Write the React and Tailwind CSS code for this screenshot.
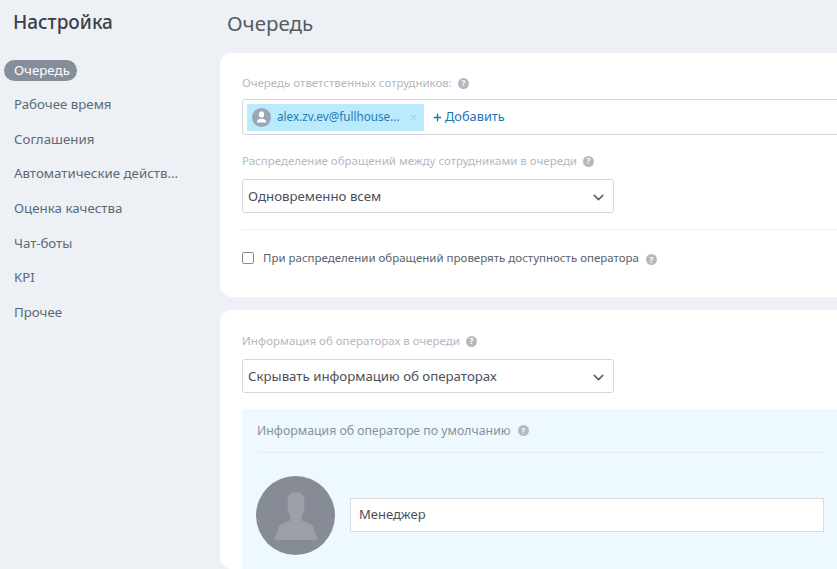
import React from "react";
import { ChevronDown, Plus, X } from "lucide-react";

const menu = [
  "Очередь",
  "Рабочее время",
  "Соглашения",
  "Автоматические действ...",
  "Оценка качества",
  "Чат-боты",
  "KPI",
  "Прочее",
];

const Help = ({ className = "" }) => (
  <span className={`inline-flex w-[11px] h-[11px] rounded-full bg-[#b5b9be] text-white text-[8px] font-bold leading-none items-center justify-center ${className}`}>
    ?
  </span>
);

const Label = ({ children }) => (
  <div className="flex items-center gap-[6px] text-[11.5px] leading-[16px] text-[#b4b8bd]">
    {children}
    <Help />
  </div>
);

const Select = ({ children }) => (
  <div className="w-[372px] h-[34px] mt-[10px] flex items-center justify-between pl-[5px] pr-[6px] pt-[2px] bg-white border border-[#d5d9de] rounded-[3px] text-[13.25px] text-[#4a505a]">
    {children}
    <ChevronDown size={17} strokeWidth={2.2} className="text-[#5a616b]" />
  </div>
);

const App = () => {
  return (
    <div className="w-[837px] h-[569px] overflow-hidden flex bg-[#edf1f5] font-['Noto_Sans',sans-serif]">
      {/* Sidebar */}
      <aside className="w-[220px] shrink-0">
        <h1 className="pl-[13px] pt-[9px] text-[19px] leading-[26px] font-medium text-[#3b4048]">Настройка</h1>
        <nav className="mt-[25px] flex flex-col gap-[13.6px] items-start">
          {menu.map((item, i) => (
            <div
              key={item}
              className={
                i === 0
                  ? "ml-[4px] pl-[10px] pr-[7px] h-[21px] flex items-center rounded-full bg-[#868e99] text-[13.3px] text-white"
                  : "ml-[14px] h-[21px] flex items-center text-[13.3px] text-[#5f6975]"
              }
            >
              {item}
            </div>
          ))}
        </nav>
      </aside>

      {/* Main */}
      <main className="flex-1 min-w-0">
        <h2 className="pl-[7px] pt-[8px] h-[53px] text-[20.5px] leading-[30px] text-[#555b63]">Очередь</h2>

        <section className="h-[244px] bg-white rounded-l-xl pl-[22px] pt-[22px]">
          <Label>Очередь ответственных сотрудников:</Label>
          <div className="w-[640px] h-[36px] mt-[8px] flex items-center pl-[4px] bg-white border border-[#d5d9de] rounded-[3px]">
            <div className="w-[177px] h-[27px] flex items-center bg-[#b9ebfd] pl-[5px] pr-[6px]">
              <div className="w-[19px] h-[19px] rounded-full bg-[#9aa5b5] flex items-center justify-center shrink-0">
                <svg width="11" height="12" viewBox="0 0 11 12" fill="white">
                  <ellipse cx="5.5" cy="3.4" rx="2.6" ry="3.2" />
                  <path d="M0.8 11.500c0-2.600 2-3.400 3.200-3.800h3c1.200 .4 3.200 1.200 3.200 3.800z" />
                </svg>
              </div>
              <span className="ml-[6px] text-[11.7px] text-[#2878b5] whitespace-nowrap">alex.zv.ev@fullhouse...</span>
              <X size={9} strokeWidth={2} className="ml-auto text-[#9fb4c0]" />
            </div>
            <Plus size={11} strokeWidth={3} className="ml-[8px] text-[#1e73b8]" />
            <span className="ml-[2px] text-[12.8px] text-[#1e73b8]">Добавить</span>
          </div>

          <div className="mt-[18px]">
            <Label>Распределение обращений между сотрудниками в очереди</Label>
          </div>
          <Select>Одновременно всем</Select>
          <div className="mt-[16px] h-px bg-[#eef0f2]" />

          <div className="mt-[20px] flex items-center">
            <span className="w-[12px] h-[12px] border-[1.5px] border-[#868c95] rounded-[2px] bg-white" />
            <span className="ml-[9px] text-[11.5px] leading-[16px] text-[#5b616b]">
              При распределении обращений проверять доступность оператора
            </span>
            <Help className="ml-[7px] mt-[3px]" />
          </div>
        </section>

        <section className="mt-[13px] h-[259px] bg-white rounded-l-xl pl-[22px] pt-[23px]">
          <Label>Информация об операторах в очереди</Label>
          <Select>Скрывать информацию об операторах</Select>

          <div className="mt-[16px] h-[160px] bg-[#edf9ff] pl-[14px] pr-[13px] pt-[14px]">
            <div className="ml-px h-[30px] border-b border-[#e3edf2] flex items-start gap-[7px] text-[12.3px] leading-[16px] text-[#8a9097]">
              Информация об операторе по умолчанию
              <Help className="mt-[2px]" />
            </div>
            <div className="mt-[23px] flex items-center gap-[15px]">
              <div className="w-[79px] h-[79px] rounded-full bg-[#868b95] shrink-0 flex items-end justify-center pb-[15px]">
                <svg width="44" height="48" viewBox="0 0 44 48" fill="#9a9fa8">
                  <path d="M22 0c5 0 8.500 3 8.500 9v7c0 3.500-1.500 6-3 8v4c2.500 2 9 3 11 5.500 1.500 2.500 4 11 5.500 15H0c1.500-4 4-12.500 5.500-15 2-2.500 8.500-3.500 11-5.500v-4c-1.500-2-3-4.500-3-8V9c0-6 3.500-9 8.500-9z" />
                </svg>
              </div>
              <div className="flex-1 h-[34px] mb-[2px] flex items-center px-[8px] pt-[1px] bg-white border border-[#d8dce1] text-[13px] text-[#4a505a]">
                Менеджер
              </div>
            </div>
          </div>
        </section>
      </main>
    </div>
  );
};

export default App;
